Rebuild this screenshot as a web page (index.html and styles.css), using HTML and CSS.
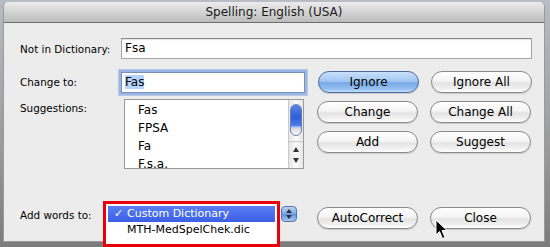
FILE: index.html
```html
<!DOCTYPE html>
<html>
<head>
<meta charset="utf-8">
<link rel="stylesheet" href="styles.css">
</head>
<body>
<div class="window">
  <div class="titlebar">Spelling: English (USA)</div>
  <div class="content">
    <div class="row row1">
      <div class="label">Not in Dictionary:</div>
      <div class="field wide">Fsa</div>
    </div>
    <div class="row row2">
      <div class="label">Change to:</div>
      <div class="field focus"><span class="sel">Fas</span></div>
      <div class="btn default">Ignore</div>
      <div class="btn">Ignore All</div>
    </div>
    <div class="lower">
      <div class="label sugg">Suggestions:</div>
      <div class="list">
        <div class="items">
          <div class="item">Fas</div>
          <div class="item">FPSA</div>
          <div class="item">Fa</div>
          <div class="item">F.s.a.</div>
        </div>
        <div class="scroll">
          <div class="thumb"></div>
          <div class="arrows">
            <span class="up"></span>
            <span class="down"></span>
          </div>
        </div>
      </div>
      <div class="btns">
        <div class="btnrow"><div class="btn">Change</div><div class="btn">Change All</div></div>
        <div class="btnrow"><div class="btn">Add</div><div class="btn">Suggest</div></div>
      </div>
    </div>
    <div class="row bottom">
      <div class="label">Add words to:</div>
      <div class="popwrap">
        <div class="menu">
          <div class="mitem on"><span class="check">✓</span>Custom Dictionary</div>
          <div class="mitem">MTH-MedSpelChek.dic</div>
        </div>
        <div class="stepper"><span class="up"></span><span class="down"></span></div>
      </div>
      <div class="btn">AutoCorrect</div>
      <div class="btn">Close</div>
    </div>
  </div>
  <svg class="cursor" width="14" height="22" viewBox="0 0 14 22">
    <path d="M1 1 L1 16 L4.5 12.5 L7.5 19.5 L10 18.5 L7 11.5 L12 11.5 Z" fill="#000" stroke="#fff" stroke-width="1"/>
  </svg>
</div>
</body>
</html>
```
FILE: styles.css
```css
html, body { margin: 0; padding: 0; }
body {
  width: 550px; height: 247px; overflow: hidden;
  background: linear-gradient(#b8bcc4, #9a9a9a 60%, #7c7c7c);
  font-family: "DejaVu Sans", "Liberation Sans", sans-serif;
  color: #000;
}
.window {
  position: relative;
  margin: 2px 0 0 3px;
  width: 542px; height: 240px;
  background: #ececec;
  border: 1px solid #9a9a9a;
  border-top: none;
  border-radius: 5px 5px 0 0;
  box-sizing: border-box;
}
.titlebar {
  height: 20px;
  border-radius: 5px 5px 0 0;
  background: linear-gradient(#ececec, #d4d4d4 50%, #bcbcbc);
  border-bottom: 1px solid #6e6e6e;
  font-size: 12px;
  line-height: 20px;
  text-align: center;
  color: #1a1a1a;
}
.content { padding: 15px 0 0 16px; }
.row { display: flex; align-items: center; }
.label { width: 101px; font-size: 10.4px; flex: none; }
.field {
  height: 21px; box-sizing: border-box;
  background: #fff;
  border: 1px solid #a5a5a5; border-top-color: #8a8a8a;
  box-shadow: inset 0 1px 1px rgba(0,0,0,0.12);
  font-size: 12px; line-height: 19px; padding-left: 3px;
}
.wide { width: 411px; }
.row2 { margin-top: 12px; }
.focus {
  width: 184px; height: 21px;
  border-color: #7a8fb4;
  box-shadow: 0 0 0 2px #9ab6e6, 0 0 0 3px rgba(110,150,220,0.4);
  margin-right: 13px;
}
.sel { background: #b5d3fd; }
.btn {
  width: 101px; height: 22px; box-sizing: border-box;
  border: 1px solid #8a8a8a;
  border-radius: 11px;
  background: linear-gradient(#ffffff, #f4f4f4 45%, #e3e3e3 55%, #f2f2f2 85%, #ffffff);
  box-shadow: 0 1px 1px rgba(0,0,0,0.15);
  font-size: 12px; line-height: 20px; text-align: center;
  flex: none;
}
.btn + .btn { margin-left: 12px; }
.default {
  border-color: #4d6c9e;
  background: linear-gradient(#c9e0fa, #a3c7f2 45%, #78a9e8 55%, #95c0f2 85%, #c4e0fb);
}
.lower { display: flex; margin-top: 6px; }
.sugg { padding-top: 3px; width: 104px; }
.list {
  width: 180px; height: 70px; box-sizing: border-box;
  border: 1px solid #9a9a9a; background: #fff;
  display: flex; margin-right: 13px;
}
.items { flex: 1; padding: 1px 0 0 13px; overflow: hidden; font-size: 12px; }
.item { height: 18px; line-height: 18px; }
.scroll {
  width: 14px; border-left: 1px solid #c8c8c8;
  background: linear-gradient(90deg, #e6e6e6, #fafafa 50%, #e6e6e6);
  display: flex; flex-direction: column; justify-content: space-between;
}
.thumb {
  margin: 4px 1px 0 1px; height: 30px; border-radius: 7px;
  background: linear-gradient(#5a86e8 0, #2f5ed8 40%, #4c7ff0 70%, #9cbcf5 72%, #e0e0e0 80%, #f4f4f4);
  border: 1px solid #6a7fb0;
}
.arrows { display: flex; flex-direction: column; align-items: center; gap: 6px; padding-bottom: 5px; border-top: 1px solid #ccc; padding-top: 5px; }
.up, .down { width: 0; height: 0; border-left: 3px solid transparent; border-right: 3px solid transparent; }
.up { border-bottom: 5px solid #333; }
.down { border-top: 5px solid #333; }
.btns { display: flex; flex-direction: column; gap: 8px; padding-top: 2px; }
.btnrow { display: flex; }
.bottom { margin-top: 35px; align-items: flex-start; }
.bottom .label { padding-top: 5px; width: 86px; }
.popwrap { display: flex; width: 211px; flex: none; }
.menu {
  width: 167px; height: 36px; box-sizing: content-box;
  background: #fff;
  outline: 3px solid #e8000b;
  border: 2px solid #fff;
  margin-top: 0;
  font-size: 11px;
}
.mitem { height: 16px; line-height: 16px; padding-left: 19px; position: relative; }
.mitem.on { background: linear-gradient(#5b7ef2, #3a5fe6); color: #fff; }
.check { position: absolute; left: 6px; }
.stepper {
  margin-left: 4px; width: 16px; height: 16px; margin-top: 2px; box-sizing: border-box;
  border-radius: 4px; border: 1px solid #5b74a8;
  background: linear-gradient(#b9d4f6, #7aa6e6 50%, #5a8ee0 50%, #a6c9f5);
  display: flex; flex-direction: column; align-items: center; justify-content: center; gap: 2px;
}
.stepper .up { border-bottom-width: 4px; }
.stepper .down { border-top-width: 4px; }
.bottom .btn { margin-top: 3px; }
.cursor { position: absolute; left: 431px; top: 217px; }
```
